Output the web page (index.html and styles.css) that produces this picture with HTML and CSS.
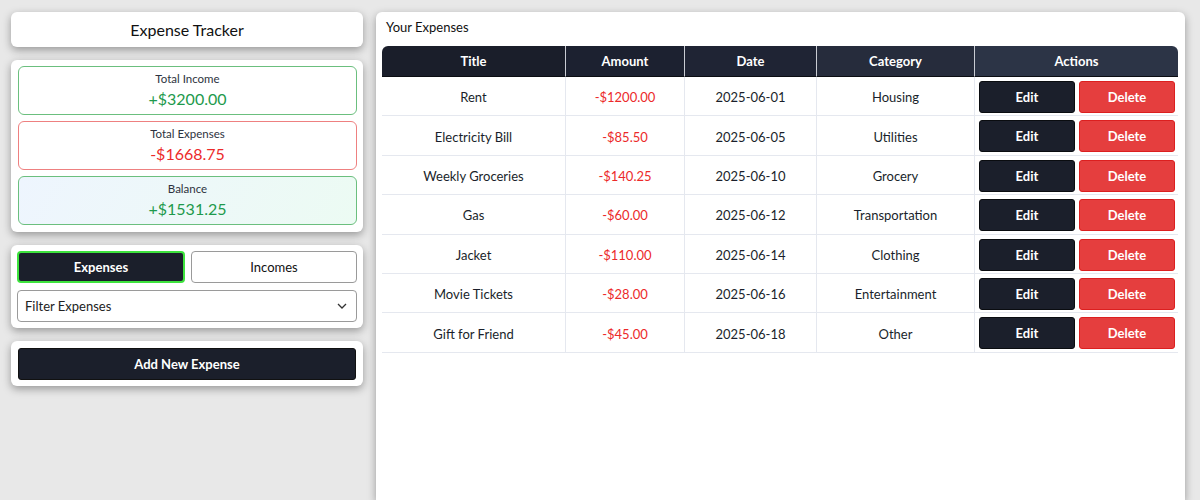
FILE: index.html
```html
<!DOCTYPE html>
<html>
<head>
<meta charset="utf-8">
<link rel="stylesheet" href="styles.css">
</head>
<body>
<div class="app">
  <aside class="side">
    <div class="card title-card"><h1>Expense Tracker</h1></div>
    <div class="card stats">
      <div class="stat income"><div class="label">Total Income</div><div class="value pos">+$3200.00</div></div>
      <div class="stat expense"><div class="label">Total Expenses</div><div class="value neg">-$1668.75</div></div>
      <div class="stat balance"><div class="label">Balance</div><div class="value pos">+$1531.25</div></div>
    </div>
    <div class="card controls">
      <div class="toggle">
        <button class="tbtn active">Expenses</button>
        <button class="tbtn">Incomes</button>
      </div>
      <div class="select"><span>Filter Expenses</span>
        <svg width="10" height="6" viewBox="0 0 10 6"><path d="M1 1l4 4 4-4" fill="none" stroke="#333" stroke-width="1.3"/></svg>
      </div>
    </div>
    <div class="card add-card"><button class="add">Add New Expense</button></div>
  </aside>
  <main class="card list">
    <div class="list-title">Your Expenses</div>
    <table>
      <thead>
        <tr><th class="c1">Title</th><th class="c2">Amount</th><th class="c3">Date</th><th class="c4">Category</th><th class="c5">Actions</th></tr>
      </thead>
      <tbody>
        <tr><td>Rent</td><td class="neg">-$1200.00</td><td>2025-06-01</td><td>Housing</td><td class="act"><button class="edit">Edit</button><button class="del">Delete</button></td></tr>
        <tr><td>Electricity Bill</td><td class="neg">-$85.50</td><td>2025-06-05</td><td>Utilities</td><td class="act"><button class="edit">Edit</button><button class="del">Delete</button></td></tr>
        <tr><td>Weekly Groceries</td><td class="neg">-$140.25</td><td>2025-06-10</td><td>Grocery</td><td class="act"><button class="edit">Edit</button><button class="del">Delete</button></td></tr>
        <tr><td>Gas</td><td class="neg">-$60.00</td><td>2025-06-12</td><td>Transportation</td><td class="act"><button class="edit">Edit</button><button class="del">Delete</button></td></tr>
        <tr><td>Jacket</td><td class="neg">-$110.00</td><td>2025-06-14</td><td>Clothing</td><td class="act"><button class="edit">Edit</button><button class="del">Delete</button></td></tr>
        <tr><td>Movie Tickets</td><td class="neg">-$28.00</td><td>2025-06-16</td><td>Entertainment</td><td class="act"><button class="edit">Edit</button><button class="del">Delete</button></td></tr>
        <tr><td>Gift for Friend</td><td class="neg">-$45.00</td><td>2025-06-18</td><td>Other</td><td class="act"><button class="edit">Edit</button><button class="del">Delete</button></td></tr>
      </tbody>
    </table>
  </main>
</div>
</body>
</html>
```

FILE: styles.css
```css
* { box-sizing: border-box; }
html, body { margin: 0; height: 100%; }
body {
  background: #e8e8e8;
  font-family: Lato, "Noto Sans", sans-serif;
  color: #1a1f2b;
  overflow: hidden;
}
.app {
  display: flex;
  gap: 13px;
  padding: 12px 15px 0 11px;
  height: 100%;
}
.side {
  width: 352px;
  flex: none;
  display: flex;
  flex-direction: column;
  gap: 13px;
}
.card {
  background: #fff;
  border-radius: 6px;
  box-shadow: 0 3px 8px rgba(0,0,0,0.35);
}
.title-card {
  height: 35px;
  display: flex;
  align-items: center;
  justify-content: center;
}
.title-card h1 {
  margin: 0;
  font-size: 16px;
  font-weight: 400;
  color: #111;
}
.stats {
  padding: 6px 6px 7px 7px;
  display: flex;
  flex-direction: column;
  gap: 6px;
}
.stat {
  height: 49px;
  border: 1px solid #6bbf7e;
  border-radius: 6px;
  text-align: center;
  padding-top: 4px;
}
.stat .label { font-size: 11.5px; color: #2d3340; line-height: 15px; }
.stat .value { font-size: 16px; line-height: 24px; margin-top: 1px; }
.stat.expense { border-color: #ee8080; }
.stat.balance {
  background: linear-gradient(120deg, #eef5fe 0%, #ecfbf3 100%);
  border-color: #6bbf7e;
}
.pos { color: #1e9a4c; }
.neg { color: #ec2a2a; }
.controls {
  padding: 6px;
  display: flex;
  flex-direction: column;
  gap: 7px;
}
.toggle { display: flex; gap: 6px; }
.tbtn {
  flex: 1;
  height: 32px;
  border: 1px solid #9a9a9a;
  border-radius: 4px;
  background: #fff;
  font-family: inherit;
  font-size: 13px;
  color: #111;
}
.tbtn.active {
  background: #1b1f2b;
  color: #fff;
  border: 2px solid #3ee33e;
  font-weight: 700;
}
.select {
  height: 32px;
  border: 1px solid #9a9a9a;
  border-radius: 4px;
  display: flex;
  align-items: center;
  justify-content: space-between;
  padding: 0 9px 0 7px;
  font-size: 13px;
  color: #222;
}
.add-card { padding: 7px 7px 6px 7px; }
.add {
  width: 100%;
  height: 32px;
  background: #1b1f2b;
  color: #fff;
  border: 1px solid #111;
  border-radius: 3px;
  font-family: inherit;
  font-weight: 700;
  font-size: 13px;
}
.list {
  flex: 1;
  padding: 8px 7px 0 6px;
  border-radius: 6px 6px 0 0;
}
.list-title {
  font-size: 13px;
  color: #111;
  padding-left: 4px;
  height: 26px;
  line-height: 15px;
}
table {
  width: 100%;
  border-collapse: separate;
  border-spacing: 0;
  font-size: 13px;
}
thead th {
  height: 31px;
  color: #fff;
  font-weight: 700;
  background: #1b1f2b;
  border-right: 1px solid #c9ccd3;
  border-bottom: 1px solid #0b0d12;
}
thead th:last-child { border-right: none; }
th.c1 { width: 184px; border-top-left-radius: 6px; background: #1a1e2a; }
th.c2 { width: 119px; background: #1c2130; }
th.c3 { width: 132px; background: #1f2434; }
th.c4 { width: 158px; background: #262c3c; }
th.c5 { border-top-right-radius: 6px; background: #2c3446; }
tbody td {
  height: 39.4px;
  padding-top: 3px;
  text-align: center;
  border-right: 1px solid #e5e8ef;
  border-bottom: 1px solid #e5e8ef;
  color: #1a1f2b;
}
tbody td.neg { color: #ec2a2a; }
tbody td:last-child { border-right: none; }
td.act {
  padding: 4px 3px 3px 4px;
  white-space: nowrap;
  display: flex;
  gap: 4px;
  height: 39.4px;
}
td.act button {
  flex: 1;
  height: 32px;
  border-radius: 3px;
  font-family: inherit;
  font-size: 13px;
  font-weight: 700;
  color: #fff;
}
.edit { background: #1b1f2b; border: 1px solid #0a0c10; }
.del { background: #e53e3e; border: 1px solid #dc1f1f; }
```
